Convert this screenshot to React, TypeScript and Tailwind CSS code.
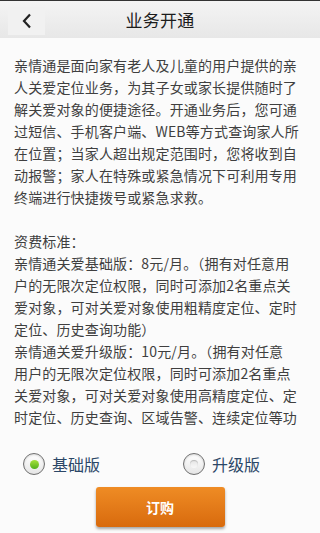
import React from 'react';

const intro = [
  '亲情通是面向家有老人及儿童的用户提供的亲',
  '人关爱定位业务，为其子女或家长提供随时了',
  '解关爱对象的便捷途径。开通业务后，您可通',
  '过短信、手机客户端、WEB等方式查询家人所',
  '在位置；当家人超出规定范围时，您将收到自',
  '动报警；家人在特殊或紧急情况下可利用专用',
  '终端进行快捷拨号或紧急求救。',
  '',
  '资费标准：',
  '亲情通关爱基础版：8元/月。（拥有对任意用',
  '户的无限次定位权限，同时可添加2名重点关',
  '爱对象，可对关爱对象使用粗精度定位、定时',
  '定位、历史查询功能）',
  '亲情通关爱升级版：10元/月。（拥有对任意',
  '用户的无限次定位权限，同时可添加2名重点',
  '关爱对象，可对关爱对象使用高精度定位、定',
  '时定位、历史查询、区域告警、连续定位等功',
];

const Radio = ({ label, checked }: { label: string; checked?: boolean }) => (
  <div className="flex items-center gap-[7px] pl-[23px]">
    <div className="w-[22px] h-[22px] rounded-full border-[1.5px] border-[#6f6f6f] bg-gradient-to-b from-[#ffffff] to-[#e6e6e6] flex items-center justify-center shadow-[inset_0_1px_2px_rgba(0,0,0,0.15)]">
      {checked ? (
        <div className="w-[9px] h-[9px] rounded-full bg-gradient-to-b from-[#a6e23c] to-[#4fb01a]" />
      ) : (
        <div className="w-[8px] h-[8px] rounded-full bg-gradient-to-b from-[#e4e4e4] to-[#f8f8f8] shadow-[inset_0_1px_1px_rgba(0,0,0,0.2)]" />
      )}
    </div>
    <span className="text-[16px] leading-[22px] text-[#2b4767]">{label}</span>
  </div>
);

const App = () => {
  return (
    <div
      className="w-[320px] h-[533px] flex flex-col bg-[#fbfbfb] overflow-hidden"
      style={{ fontFamily: '"Noto Sans CJK SC", "Noto Sans", sans-serif' }}
    >
      <header className="h-[38px] shrink-0 border-t border-[#333] bg-gradient-to-b from-[#f4f4f4] to-[#e7e7e7] relative flex items-center justify-center">
        <button className="absolute left-[8px] top-[6px] w-[37px] h-[28px] bg-[#f1f1f1] flex items-center justify-center">
          <svg width="12" height="16" viewBox="0 0 12 16">
            <path d="M9 1.5 L3 8 L9 14.5" fill="none" stroke="#222" strokeWidth="2.2" />
          </svg>
        </button>
        <h1 className="text-[17px] text-[#1c1c1c] tracking-[0.3px]">业务开通</h1>
      </header>

      <main className="flex-1 overflow-hidden pt-[16px] pl-[14px]">
        {intro.map((line, i) => (
          <p
            key={i}
            className="h-[22px] leading-[22px] text-[14px] tracking-[0.15px] whitespace-nowrap text-[#3f3f3f]"
          >
            {line}
          </p>
        ))}
      </main>

      <div className="shrink-0 h-[103px] pt-[23px]">
        <div className="grid grid-cols-2 h-[22px]">
          <Radio label="基础版" checked />
          <Radio label="升级版" />
        </div>
        <div className="flex justify-center mt-[12px]">
          <button className="w-[129px] h-[40px] rounded-[3px] bg-gradient-to-b from-[#ef8c24] to-[#d86a0c] shadow-[0_2px_3px_rgba(0,0,0,0.35)] text-white text-[14px] font-bold">
            订购
          </button>
        </div>
      </div>
    </div>
  );
};

export default App;
